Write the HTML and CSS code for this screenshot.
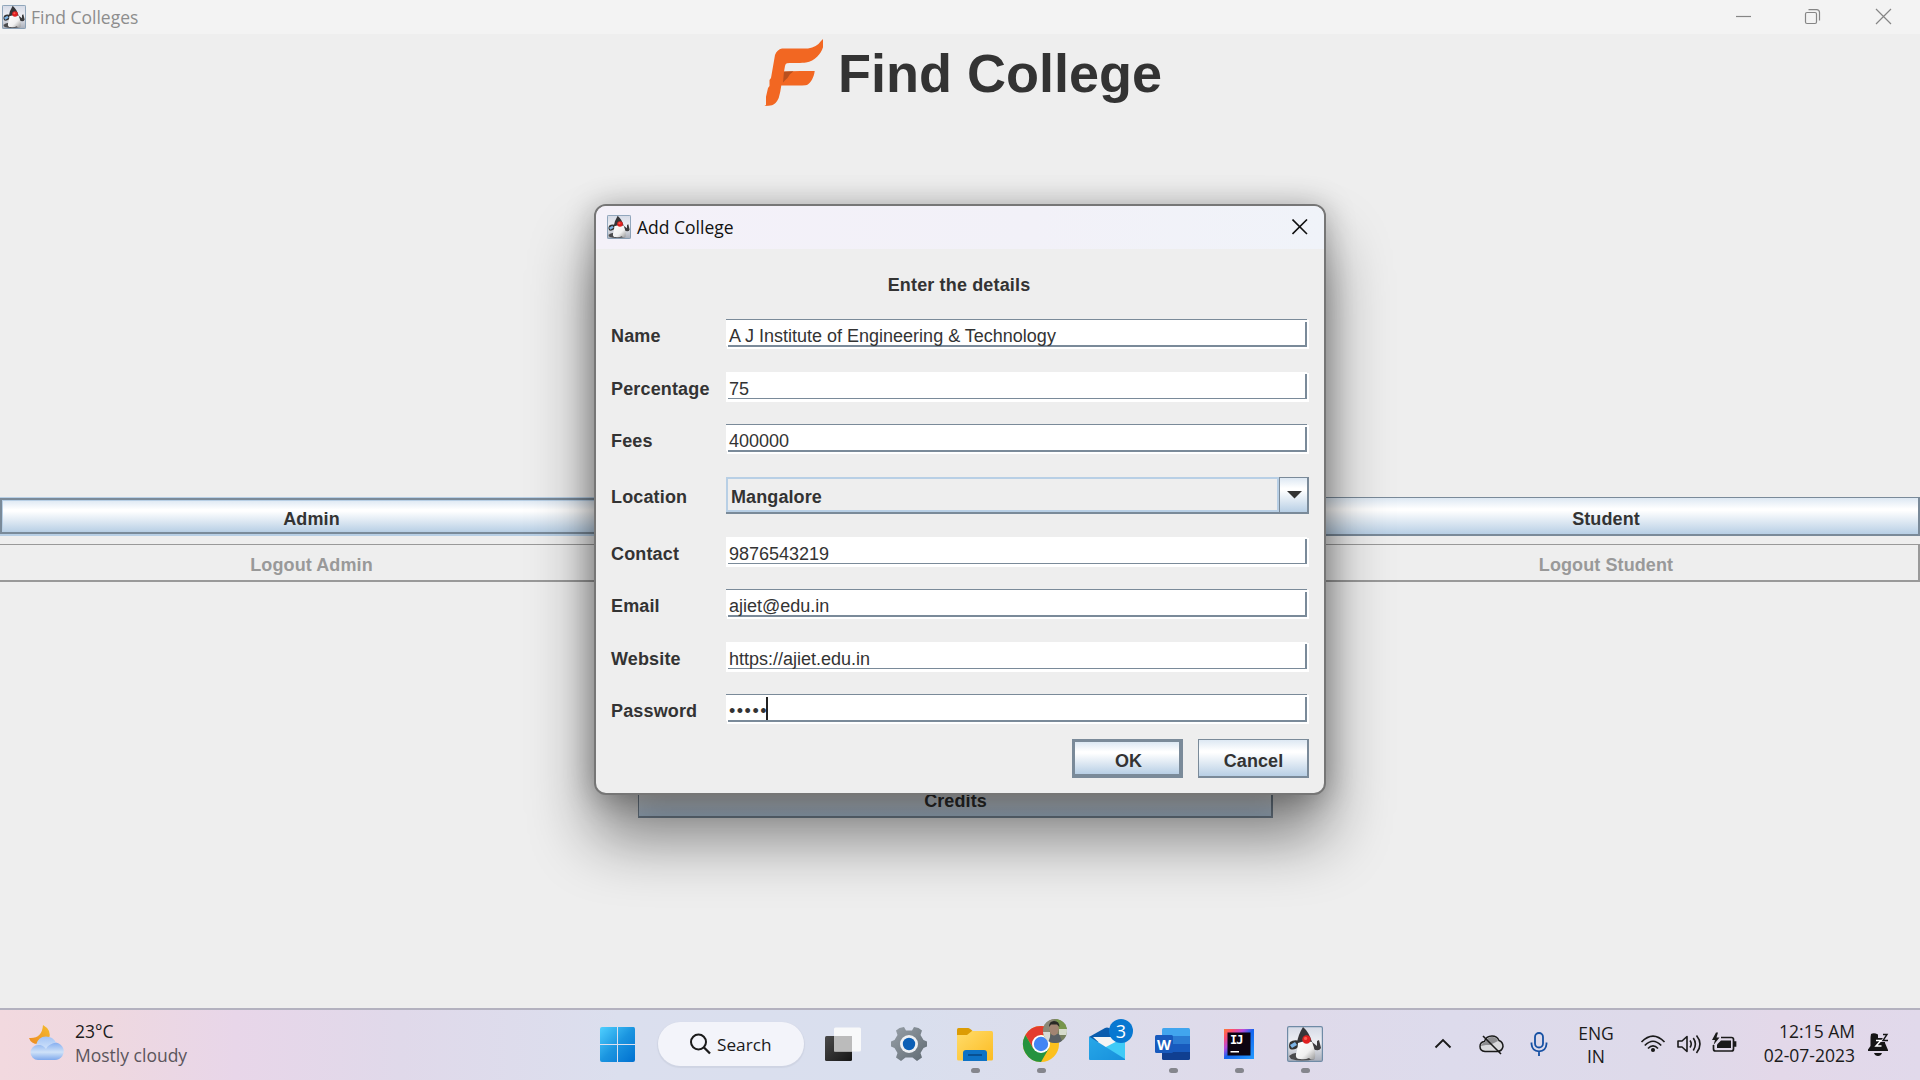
FILE: index.html
```html
<!DOCTYPE html>
<html lang="en">
<head>
<meta charset="utf-8">
<title>Find Colleges</title>
<link rel="stylesheet" href="styles.css">
</head>
<body>
<svg class="defs" width="0" height="0" aria-hidden="true">
  <defs>
    <linearGradient id="dukeBg" x1="0" y1="0" x2="0" y2="1"><stop offset="0" stop-color="#d5dae6"/><stop offset=".45" stop-color="#eeeff4"/><stop offset="1" stop-color="#a9aeb9"/></linearGradient>
    <linearGradient id="dukeBody" x1="0" y1="0" x2="1" y2="1"><stop offset="0" stop-color="#fff"/><stop offset=".6" stop-color="#f0f0f0"/><stop offset="1" stop-color="#999"/></linearGradient>
    <symbol id="duke" viewBox="0 0 36 36">
      <rect x=".6" y=".6" width="34.8" height="34.8" rx="1.5" fill="url(#dukeBg)" stroke="#6f8ba6" stroke-width="1.2"/>
      <path d="M2 30Q8 25 12 28L28 33Q14 36 4 33Z" fill="#4a4a4c"/>
      <path d="M3 16Q7 13 13 15L12 20Q8 25 3 23Q1 20 3 16Z" fill="#333"/>
      <path d="M3 19L8 16L10 19L5 22Z" fill="#7db4e6"/>
      <path d="M25 16L30 20L30 15L32 14L34 22Q32 26 26 23Z" fill="#3b3b3d"/>
      <path d="M16 1Q22 6 25 16L21 19L10 17Q11 9 16 1Z" fill="#353538"/>
      <path d="M11 17Q18 14 25 16Q29 26 28 32Q25 35 22 32Q18 34 13 33Q8 33 9 28Q11 22 11 17Z" fill="url(#dukeBody)"/>
      <circle cx="19.5" cy="13.5" r="4.2" fill="#df2020"/>
      <circle cx="18.6" cy="12.4" r="1.6" fill="#fb5c50"/>
    </symbol>
  </defs>
</svg>

<div class="desktop">
  <header class="titlebar">
    <svg class="title-icon" width="24" height="24"><use href="#duke"/></svg>
    <span class="title-text">Find Colleges</span>
    <svg class="window-controls" width="158" height="34" fill="none" stroke="#858585" stroke-width="1.2">
      <path d="M-1 16.5H14"/>
      <rect x="68.5" y="12.5" width="11" height="11" rx="1.5"/>
      <path d="M71.5 9.6H79.5Q82.5 9.6 82.5 12.6V20.5"/>
      <path d="M139 9L154 24M154 9L139 24"/>
    </svg>
  </header>

  <main class="app">
    <div class="brand">
      <svg width="60" height="68" viewBox="0 0 60 68">
        <path fill="#f26722" d="M59 1V9.3C57 16 51 23 42 24.6C38 25.3 30 24.8 23 25.2Q21.5 25.5 21 28L20 33.7C30 32.5 40 33 50.7 33C50 39 47 45 43 47Q41 47.7 17.3 47.5Q16.5 54 14.7 60Q12 66 8 67.2Q5 68 .5 68L2 67V58.7L4 50L5.5 48V42L7 40L11 17Q13 11.5 18 10.5H44Q53 9 57 3Z"/>
        <path fill="#b9501e" d="M20 33.5L29.5 33.2Q25 36 23.5 40Q21 42 19 44.5Z"/>
      </svg>
      <h1>Find College</h1>
    </div>
    <div class="columns">
      <div class="column column-admin">
        <button class="metal focused">Admin</button>
        <button class="metal disabled">Logout Admin</button>
      </div>
      <div class="column column-credits">
        <button class="metal">Credits</button>
      </div>
      <div class="column column-student">
        <button class="metal">Student</button>
        <button class="metal disabled">Logout Student</button>
      </div>
    </div>
  </main>

  <footer class="taskbar">
    <div class="weather">
      <svg width="38" height="38" viewBox="0 0 38 38">
        <defs>
          <linearGradient id="moon" x1="1" y1="0" x2="0" y2="1"><stop offset="0" stop-color="#f5bd2e"/><stop offset="1" stop-color="#ec8a22"/></linearGradient>
          <linearGradient id="cloudBack" x1="0" y1="0" x2="0" y2="1"><stop offset="0" stop-color="#a3c4f5"/><stop offset="1" stop-color="#d0e2fa"/></linearGradient>
          <linearGradient id="cloudFront" x1="0" y1="0" x2="0" y2="1"><stop offset="0" stop-color="#86aef0"/><stop offset=".55" stop-color="#cfe2f8"/><stop offset="1" stop-color="#7fa9ec"/></linearGradient>
        </defs>
        <path fill="url(#moon)" d="M15 1Q24 6 21 15L10 20Q3 20 1 14Q14 15 15 1Z"/>
        <path fill="url(#cloudFront)" d="M10 21a7.5 7.5 0 0 0 0 15H27a8.7 8.7 0 1 0-6-15Z"/>
        <path fill="url(#cloudBack)" d="M8 21Q10 12.5 18 12.5Q25 12.5 28 18.5Q20 20 18 25Q14 20 8 21Z"/>
      </svg>
      <div class="weather-text"><span>23°C</span><span class="muted">Mostly cloudy</span></div>
    </div>

    <svg class="start" width="36" height="36" viewBox="0 0 36 36">
      <defs><linearGradient id="win" x1="0" y1="0" x2="1" y2="1"><stop offset="0" stop-color="#4fd0ff"/><stop offset=".5" stop-color="#1b95e0"/><stop offset="1" stop-color="#0070d0"/></linearGradient></defs>
      <path fill="url(#win)" d="M2 0H17V17H0V2Q0 0 2 0ZM18 0H33.500Q35 0 35 2V17H18ZM0 18H17V35H2Q0 35 0 33ZM18 18H35V33Q35 35 33 35H18Z"/>
    </svg>
    <div class="search">
      <svg width="24" height="24" fill="none" stroke="#1a1a1a" stroke-width="2"><circle cx="10.500" cy="10" r="7.500"/><path d="M16 15.500L22 21.500" stroke-width="2.300"/></svg>
      <span>Search</span>
    </div>

    <div class="apps">
      <svg class="slot" viewBox="0 0 66 70">
        <defs><linearGradient id="tvDark" x1="0" y1="0" x2="1" y2="1"><stop offset="0" stop-color="#4a4a4a"/><stop offset="1" stop-color="#161616"/></linearGradient></defs>
        <rect x="15" y="26" width="27" height="25" rx="1.500" fill="url(#tvDark)"/>
        <rect x="24" y="17.500" width="27" height="24" rx="1.500" fill="#fafafa" fill-opacity=".95"/>
        <rect x="24" y="26" width="18" height="15.500" fill="#bbb"/>
      </svg>
      <svg class="slot" viewBox="0 0 66 70">
        <defs><linearGradient id="gear" x1="0" y1="0" x2="1" y2="1"><stop offset="0" stop-color="#98a0a8"/><stop offset="1" stop-color="#5f6a72"/></linearGradient></defs>
        <path fill="url(#gear)" d="M23.500 18L28 17L30 20.500H36L38 17L42.500 18L46 20.500L44.500 25L47.500 30L51 31.500V36.500L47.500 38L44.500 43L46 47.500L41 51L36.500 47.500H29.500L25 51L20 47.500L21.500 43L18.500 38L15 36.500V31.500L18.500 30L21.500 25L20 20.500Z"/>
        <circle cx="33" cy="34" r="9" fill="#eef0f3"/><circle cx="33" cy="34" r="6.200" fill="#0c5fb5"/>
      </svg>
      <svg class="slot" viewBox="0 0 66 70">
        <defs><linearGradient id="fold" x1="0" y1="0" x2="1" y2="1"><stop offset="0" stop-color="#ffdc6b"/><stop offset="1" stop-color="#fcbc22"/></linearGradient></defs>
        <path fill="#dc9c04" d="M16.500 18H26Q28 18 31 21.500V27H15V19.500Q15 18 16.500 18Z"/>
        <path fill="url(#fold)" d="M15 25H25L30 21H49.500Q51 21 51 23V49Q51 50.500 49.500 50.500H16.500Q15 50.500 15 49Z"/>
        <path fill="#0e72c5" d="M21 51V43Q21 40 24 40H42Q45 40 45 43V51Z"/><path d="M26 45H40" stroke="#084c8d" stroke-width="1.800"/>
        <rect class="dot" x="29" y="58" width="9" height="5" rx="2.500"/>
      </svg>
      <svg class="slot" viewBox="0 0 66 70">
        <circle cx="33" cy="34" r="18" fill="#fcc01e"/>
        <path fill="#e33b2e" d="M17.400 25A18 18 0 0 1 48.600 25H33L25.200 38.500Z"/>
        <path fill="#25933f" d="M17.400 25A18 18 0 0 0 33 52L40.800 38.500H25.200Z"/>
        <circle cx="33" cy="34" r="9" fill="#fff"/><circle cx="33" cy="34" r="7.200" fill="#4285f4"/>
        <clipPath id="face"><circle cx="47" cy="21" r="12"/></clipPath>
        <g clip-path="url(#face)">
          <rect x="35" y="9" width="24" height="24" fill="#77805e"/>
          <path d="M35 9H46L41 22L35 25Z" fill="#8b8877"/><path d="M48 9H59V21L51 22Z" fill="#77964b"/>
          <path d="M51 19H59V25H51Z" fill="#d7dccb"/>
          <path d="M35 22H42V33H35Z" fill="#d9d9d5"/>
          <path d="M40 33L43 24H51L55 33Z" fill="#5a6065"/>
          <ellipse cx="46" cy="19" rx="4.800" ry="6.500" fill="#a18472"/><path d="M41 17Q41 11 46 11Q51.500 11 51.500 17L49 14.500H43Z" fill="#292925"/>
        </g>
        <rect class="dot" x="29" y="58" width="9" height="5" rx="2.500"/>
      </svg>
      <svg class="slot" viewBox="0 0 66 70">
        <defs><linearGradient id="mail" x1="0" y1="0" x2="1" y2="1"><stop offset="0" stop-color="#28a8e8"/><stop offset="1" stop-color="#1790dc"/></linearGradient></defs>
        <path fill="#0a5cad" d="M15 27L31 18Q33 17 35 18L51 27V32H15Z"/>
        <path fill="#f4f4f4" d="M19 27H47L41 34L32 39Z"/>
        <path fill="#40cbf7" d="M51 27V50L28 39Z"/>
        <path fill="url(#mail)" d="M15 26.500L51 49V50H16Q15 50 15 49Z"/>
        <circle cx="47" cy="21" r="12" fill="#0878d1"/><text x="47" y="27.500" class="badge-number">3</text>
      </svg>
      <svg class="slot" viewBox="0 0 66 70">
        <path fill="#41a5ee" d="M22 27V19.500Q22 18 23.500 18H48.500Q50 18 50 19.500V27Z"/>
        <path fill="#2b7cd3" d="M22 26H50V34H22Z"/><path fill="#185abd" d="M22 34H50V42H22Z"/><path fill="#103f91" d="M22 42H50V48.500Q50 50 48.500 50H23.500Q22 50 22 48.500Z"/>
        <rect x="15" y="25" width="18" height="18" rx="1.500" fill="#185abd"/>
        <text x="24" y="39.500" class="word-letter">W</text>
        <rect class="dot" x="29" y="58" width="9" height="5" rx="2.500"/>
      </svg>
      <svg class="slot" viewBox="0 0 66 70">
        <defs><linearGradient id="ij" x1="0" y1="0" x2="1" y2="1"><stop offset="0" stop-color="#fc7d34"/><stop offset=".16" stop-color="#fe4d6d"/><stop offset=".34" stop-color="#b64be0"/><stop offset=".5" stop-color="#1465ee"/><stop offset="1" stop-color="#239bff"/></linearGradient></defs>
        <rect x="18" y="19" width="30" height="30" fill="url(#ij)"/><rect x="21.500" y="22.500" width="23" height="23" fill="#0c0310"/>
        <text x="24" y="34" class="ij-letters">IJ</text><rect x="24.500" y="41" width="8.500" height="1.500" fill="#fff"/>
        <rect class="dot" x="29" y="58" width="9" height="5" rx="2.500"/>
      </svg>
      <svg class="slot" viewBox="0 0 66 70">
        <use href="#duke" x="15" y="16" width="36" height="36"/>
        <rect class="dot" x="29" y="58" width="9" height="5" rx="2.500"/>
      </svg>
    </div>

    <div class="tray">
      <svg width="46" height="70" fill="none" stroke="#1a1a1a" stroke-width="1.900"><path d="M15.500 37.500L23 30L30.500 37.500"/></svg>
      <svg width="50" height="70" viewBox="0 0 50 70">
        <path fill="#d9d9dc" stroke="#1a1a1a" stroke-width="1.500" d="M19 41.500Q14 41 14 36.500Q14 32 18.500 31.500Q20 26 26 26Q31 26 33 30.500Q37 32 37 36.500Q36 41.500 31 41.500Z"/>
        <path fill="#8d8d90" d="M15 36Q15 33 19 32.500Q21 27 26 27Q30 27 32 31L24 35L20 35Z"/>
        <path d="M17 26L35 44" stroke="#1a1a1a" stroke-width="1.600"/>
      </svg>
      <svg width="46" height="70" fill="none" stroke="#1650a3" stroke-width="1.800"><rect x="19" y="23" width="8" height="14.500" rx="4"/><path d="M15.500 32.500V34Q16 41 23 41.300Q30 41 30.500 34V32.500M23 41V46"/></svg>
      <div class="language"><span>ENG</span><span>IN</span></div>
      <svg class="status" width="36" height="70" fill="none" stroke="#1a1a1a" stroke-width="1.700"><path d="M6.500 32Q18 20.500 29.500 32M9.800 35.500Q18 27 26.200 35.500M13 38.500Q18 33.300 23 38.500"/><circle cx="18" cy="40" r="1.200" fill="#1a1a1a"/></svg>
      <svg class="status" width="36" height="70" fill="none" stroke="#1a1a1a" stroke-width="1.600" stroke-linejoin="round"><path d="M7 31H11L16 26.500V41.500L11 37H7ZM19 30.500Q21.500 34 19 37.500M22.300 28Q26.500 34 22.300 40.500M25.500 25.500Q32.500 34 25.500 43"/></svg>
      <svg class="status" width="36" height="70" fill="none" stroke="#1a1a1a" stroke-width="1.700"><path d="M14 27.500H24.500Q26.500 27.500 26.500 29.500V39Q26.500 41 24.500 41H8.500Q6.500 41 6.500 39V35"/><path d="M14 30.500H24V38H10V34.500Z" fill="#1a1a1a" stroke="none"/><path d="M27 32H28.500V36H27" fill="#1a1a1a"/><path d="M9 22.500L5 30H8L6.500 35L12.500 27.500H9.500L11 22.500Z" fill="#1a1a1a" stroke="none"/></svg>
      <div class="clock"><span>12:15 AM</span><span>02-07-2023</span></div>
      <svg width="40" height="70" viewBox="0 0 40 70">
        <path fill="#151515" d="M17 24Q20 22.500 24 24.500V28H31V33L34 40V41H14V39.500L16.500 36V30Q16.500 26 17 24ZM20 43H28Q27 46 24 46Q21 46 20 43Z"/>
        <path d="M29 24.500H33L29 30.500H34" fill="none" stroke="#e2d9eb" stroke-width="3"/>
        <path d="M22 30.500H27L22 36H27.500" fill="none" stroke="#fff" stroke-width="1.500"/>
        <path d="M29 24.500H33L29 30.500H34" fill="none" stroke="#151515" stroke-width="1.400"/>
      </svg>
    </div>
  </footer>

  <section class="dialog">
    <div class="dialog-title">
      <svg width="24" height="24"><use href="#duke"/></svg>
      <span class="title-text">Add College</span>
      <svg class="dialog-close" width="16" height="16" stroke="#111" stroke-width="1.600"><path d="M.5 .5L15 15M15 .5L.5 15"/></svg>
    </div>
    <div class="dialog-body">
      <div class="prompt">Enter the details</div>
      <div class="row"><label>Name</label><div class="field">A J Institute of Engineering &amp; Technology</div></div>
      <div class="row wide"><label>Percentage</label><div class="field flat">75</div></div>
      <div class="row"><label>Fees</label><div class="field">400000</div></div>
      <div class="row wide location"><label>Location</label>
        <div class="combo"><span class="combo-value">Mangalore</span><span class="combo-arrow"><svg width="15" height="8"><path d="M0 0H15L7.500 7.500Z" fill="#333"/></svg></span></div>
      </div>
      <div class="row wide"><label>Contact</label><div class="field flat">9876543219</div></div>
      <div class="row"><label>Email</label><div class="field">ajiet@edu.in</div></div>
      <div class="row wide"><label>Website</label><div class="field flat">https://ajiet.edu.in</div></div>
      <div class="row"><label>Password</label><div class="field password"><span class="bullets">•••••</span><span class="caret"></span></div></div>
      <div class="actions"><button class="metal default">OK</button><button class="metal">Cancel</button></div>
    </div>
  </section>
</div>
</body>
</html>
```
FILE: styles.css
```css
* { box-sizing: border-box; }
body { margin: 0; overflow: hidden; background: #eee; }
.defs { position: absolute; }
svg { display: block; flex: none; }

.desktop {
  position: relative;
  display: flex;
  flex-direction: column;
  width: 1920px;
  height: 1080px;
  font: 18px "Liberation Sans", Arial, sans-serif;
  color: #333;
}

.titlebar {
  display: flex;
  align-items: center;
  height: 34px;
  padding-left: 2px;
  background: #f3f3f3;
}
.title-text { font: 17.5px/24px "Open Sans", "Noto Sans", sans-serif; }
.titlebar .title-text { margin-left: 5px; color: #8d8d8d; }
.window-controls { margin: 0 25px 0 auto; overflow: visible; }

.app { flex: 1; background: #eee; }
.brand { display: flex; gap: 14px; height: 72px; padding: 4px 0 0 764px; }
.brand h1 { margin: 0; padding-top: 1px; font-size: 54px; line-height: 68px; font-weight: bold; white-space: nowrap; }

.columns { display: flex; margin-top: 391px; }
.column { display: flex; flex-direction: column; gap: 8px; }
.column-admin { width: 622px; }
.column-credits { width: 635px; margin: 282px 19px 0 16px; }
.column-student { width: 628px; }

.metal {
  height: 39px;
  margin: 0;
  padding: 6px 0 0 1px;
  border: solid #7a8a99;
  border-width: 1px 2px 2px 1px;
  border-radius: 0;
  background: linear-gradient(#dde8f3 0, #fff 30%, #fff 35%, #b8cfe5 100%);
  font: bold 18px/20px "Liberation Sans", Arial, sans-serif;
  letter-spacing: .1px;
  color: #333;
}
.metal.default { border-width: 3px 4px 4px 3px; padding: 6px 0 0 3px; }
.metal.focused {
  border: 2px solid #7a8a99;
  margin: 1px 0;
  height: 36px;
  padding-top: 6px;
  box-shadow: inset 0 0 0 1px #b8cfe5, 0 -1px 0 #b8cfe5, 0 2px 0 #b8cfe5;
}
.metal.focused + .metal { margin-top: 1px; }
.metal.disabled { height: 38px; padding-top: 5px; background: #eee; border-color: #999; color: #999; }
.column-admin .disabled { border-left: 0; padding-left: 3px; }

/* Dialog */
.dialog {
  position: absolute;
  left: 594px;
  top: 204px;
  width: 732px;
  height: 591px;
  border: 2px solid #767676;
  border-radius: 12px;
  background: #eee;
  box-shadow: 0 42px 64px rgba(0, 0, 0, .48), 0 2px 30px rgba(0, 0, 0, .28);
}
.dialog-title {
  display: flex;
  align-items: center;
  height: 43px;
  padding: 0 16px 2px 11px;
  border-radius: 10px 10px 0 0;
  background: linear-gradient(90deg, #f4f1f9, #f2f1f8 60%, #f0f3f9);
  color: #111;
}
.dialog-title .title-text { margin-left: 6px; }
.dialog-close { margin-left: auto; }
.dialog-body { padding: 25px 15px 0 15px; }
.prompt { height: 23px; padding-right: 2px; font-weight: bold; line-height: 22px; text-align: center; letter-spacing: .15px; }
.row { display: flex; justify-content: space-between; margin-top: 22px; line-height: 35px; }
.row.wide { margin-top: 23px; }
.row label { font-weight: bold; height: 30px; letter-spacing: .15px; }
.field {
  width: 583px;
  height: 30px;
  padding-left: 3px;
  overflow: hidden;
  white-space: nowrap;
  background:
    linear-gradient(#7a8a99, #7a8a99) 0 0 / 581px 1px no-repeat,
    linear-gradient(#7a8a99, #7a8a99) 2px 26px / 579px 2px no-repeat,
    linear-gradient(#7a8a99, #7a8a99) 579px 3px / 2px 25px no-repeat,
    linear-gradient(#eee, #eee) 581px 0 / 2px 1px no-repeat,
    linear-gradient(#eee, #eee) 0 27px / 1px 3px no-repeat,
    #fff;
}
.field.flat {
  background:
    linear-gradient(#7a8a99, #7a8a99) 2px 26px / 579px 1px no-repeat,
    linear-gradient(#7a8a99, #7a8a99) 579px 2px / 2px 25px no-repeat,
    linear-gradient(#eee, #eee) 581px 0 / 2px 1px no-repeat,
    #fff;
}
.field.password { display: flex; }
.bullets { letter-spacing: 1.5px; margin-right: -2px; }
.caret { width: 2px; height: 23px; margin-top: 3px; background: #222; }

.row.location { line-height: 41px; }
.combo { display: flex; width: 583px; height: 37px; border-bottom: 2px solid #7a8a99; }
.combo-value { flex: 1; border: 2px solid #b8cfe5; padding-left: 3px; font-weight: bold; line-height: 37px; letter-spacing: .1px; }
.combo-arrow {
  display: flex;
  align-items: center;
  justify-content: center;
  width: 30px;
  padding-left: 1px;
  border: solid #7a8a99;
  border-width: 1px 2px 0 1px;
  background: linear-gradient(#dde8f3 0, #fff 30%, #fff 35%, #b8cfe5 100%);
}
.actions { display: flex; justify-content: flex-end; gap: 15px; margin-top: 15px; }
.actions .metal { width: 111px; }

/* Taskbar */
.taskbar {
  display: flex;
  height: 72px;
  border-top: 2px solid #b3b1bf;
  background: linear-gradient(90deg, #f2d9df 0, #eed8e0 110px, #e8d6e9 235px, #e0d9ea 400px, #dbdfee 620px, #d9dfee 900px, #dddceb 1120px, #dfdaea 1280px, #dddbec 1450px, #dedaea 1650px, #e3d8e9 1780px, #e1d9eb 1920px);
  font: 17.5px/24px "Open Sans", "Noto Sans", sans-serif;
  color: #1b1b1b;
  white-space: nowrap;
}
.weather { display: flex; gap: 9px; width: 600px; padding: 14px 0 0 28px; }
.weather-text, .language, .clock { display: flex; flex-direction: column; }
.weather-text { margin-top: -5px; }
.muted { color: #5b555c; }
.start { margin-top: 17px; }
.search {
  display: flex;
  gap: 5px;
  width: 146px;
  height: 44px;
  margin: 12px 6px 0 22px;
  padding: 10px 0 0 30px;
  border-radius: 22px;
  background: #f3f4fa;
  box-shadow: 0 1px 1px 1px #cfd4e3;
}
.search span { font-size: 17.2px; line-height: 26px; }
.apps { display: flex; }
.slot { width: 66px; height: 70px; }
.dot { fill: #85868d; }
.badge-number { font: 18px "Open Sans", sans-serif; fill: #fff; text-anchor: middle; }
.word-letter { font: bold 14.5px "Open Sans", sans-serif; fill: #fff; text-anchor: middle; }
.ij-letters { font: bold 12px "DejaVu Sans Mono", monospace; fill: #fff; letter-spacing: -1px; }
.tray { display: flex; margin-left: 82px; }
.language { width: 68px; margin-right: 5px; padding-top: 12px; text-align: center; line-height: 23px; }
.clock { width: 112px; padding-top: 9px; text-align: right; }
.clock + svg { margin-left: -1px; }
```
